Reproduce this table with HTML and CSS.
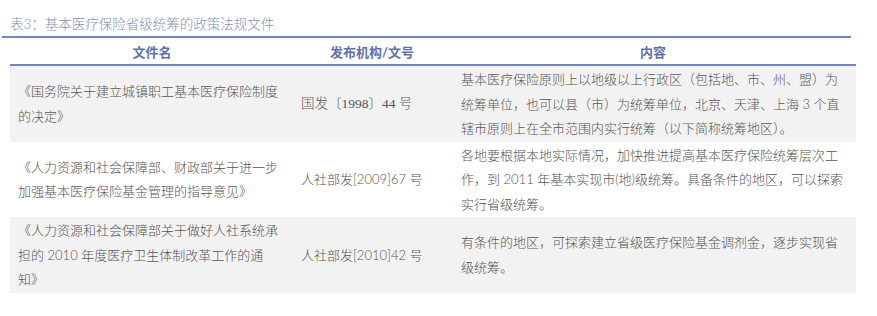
FILE: index.html
```html
<!DOCTYPE html>
<html lang="zh">
<head>
<meta charset="utf-8">
<title>表3</title>
<link rel="stylesheet" href="styles.css">
</head>
<body>
<div class="page">
  <div class="caption">表3：基本医疗保险省级统筹的政策法规文件</div>
  <div class="table">
    <div class="row head">
      <div>文件名</div>
      <div>发布机构/文号</div>
      <div>内容</div>
    </div>
    <div class="row body shaded">
      <div class="c1">《国务院关于建立城镇职工基本医疗保险制度的决定》</div>
      <div class="c2 serif">国发〔1998〕44 号</div>
      <div class="c3">基本医疗保险原则上以地级以上行政区（包括地、市、州、盟）为统筹单位，也可以县（市）为统筹单位，北京、天津、上海 3 个直辖市原则上在全市范围内实行统筹（以下简称统筹地区）。</div>
    </div>
    <div class="row body">
      <div class="c1">《人力资源和社会保障部、财政部关于进一步加强基本医疗保险基金管理的指导意见》</div>
      <div class="c2">人社部发[2009]67 号</div>
      <div class="c3">各地要根据本地实际情况，加快推进提高基本医疗保险统筹层次工作，到 2011 年基本实现市(地)级统筹。具备条件的地区，可以探索实行省级统筹。</div>
    </div>
    <div class="row body shaded">
      <div class="c1">《人力资源和社会保障部关于做好人社系统承担的 2010 年度医疗卫生体制改革工作的通知》</div>
      <div class="c2">人社部发[2010]42 号</div>
      <div class="c3">有条件的地区，可探索建立省级医疗保险基金调剂金，逐步实现省级统筹。</div>
    </div>
  </div>
</div>
</body>
</html>
```

FILE: styles.css
```css
body {
  margin: 0;
  background: #ffffff;
  font-family: Lato, "Noto Sans CJK SC", sans-serif;
}

.page {
  padding-top: 12px;
}

.caption {
  margin-left: 2px;
  width: 841px;
  padding-left: 8px;
  border-bottom: 2px solid #7088bf;
  font-size: 13.5px;
  font-weight: 300;
  line-height: 24px;
  color: #8393ba;
}

.table {
  margin-left: 10px;
  width: 846px;
}

.row {
  display: grid;
  grid-template-columns: 284px 156px 406px;
  align-items: center;
}

.head {
  height: 26px;
  border-bottom: 2px solid #7088bf;
  font-size: 13px;
  font-weight: 700;
  color: #5f71a8;
  text-align: center;
}

.body {
  padding: 1px 0;
  font-size: 13px;
  font-weight: 300;
  line-height: 24.5px;
  color: #555555;
}

.shaded {
  background: #f2f2f2;
}

.c1 {
  padding: 0 12px 0 8px;
}

.c2 {
  padding-left: 7px;
}

.c3 {
  padding: 0 11px;
}

.serif {
  font-family: "Liberation Serif", "Noto Sans CJK SC", serif;
  font-size: 13.5px;
}
```
